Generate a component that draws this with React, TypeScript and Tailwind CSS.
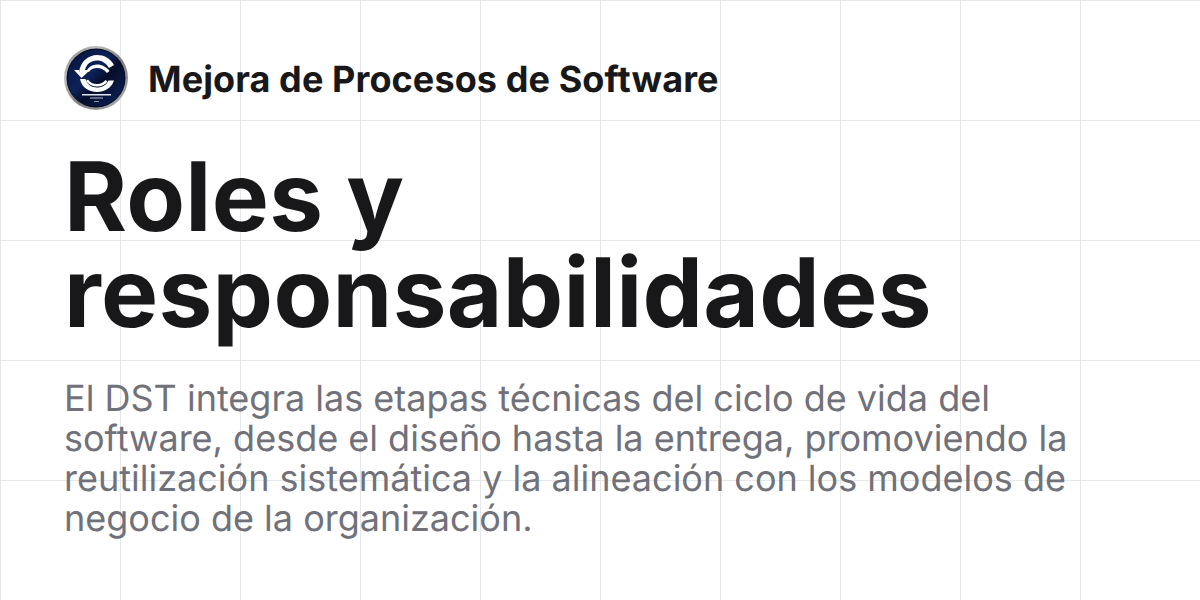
import React from 'react'

const Logo: React.FC = () => (
    <svg width="64" height="64" viewBox="0 0 64 64" className="shrink-0">
        <defs>
            <linearGradient id="ring" x1="0" y1="0" x2="1" y2="1">
                <stop offset="0" stopColor="#6b6b6b" />
                <stop offset="0.25" stopColor="#c0c0c0" />
                <stop offset="0.55" stopColor="#7d7d7d" />
                <stop offset="0.8" stopColor="#9a9a9a" />
                <stop offset="1" stopColor="#cfcfcf" />
            </linearGradient>
            <linearGradient id="face" x1="0" y1="0" x2="1" y2="1">
                <stop offset="0" stopColor="#06123a" />
                <stop offset="0.42" stopColor="#0d2258" />
                <stop offset="0.58" stopColor="#050d2a" />
                <stop offset="1" stopColor="#0e2560" />
            </linearGradient>
        </defs>
        <circle cx="32" cy="32" r="32" fill="url(#ring)" />
        <circle cx="32" cy="32" r="29.5" fill="#050b22" />
        <circle cx="32" cy="32" r="28.5" fill="url(#face)" />
        {/* outer and inner C arcs */}
        <path d="M15 27C16 15 25 9 33 9C40 9 46 12 50 19L45 22C42 17 38 14.500 33 14.500C27 14.500 22.500 18 21 24H26L17.500 32L10 24H15Z" fill="#fff" />
        <path d="M43 27C40 23.500 37 22 33 22C29.500 22 26.500 23.500 25 26L22.500 24.500C25 20.500 28.500 18.500 33 18.500C38 18.500 42.500 21 45.500 25Z" fill="#fff" />
        <path d="M16 33H21.500C23 38.500 27.500 41.500 33 41.500C38 41.500 42.500 39 44.500 34.500H50C47.500 42 40.500 46 33 46C24.500 46 17.500 41 16 33Z" fill="#fff" />
        <path d="M24 33.500C26 36.500 29 38 33 38C36.500 38 39.500 36.500 41.500 34L43.500 35.500C41 39 37.500 40.500 33 40.500C28.500 40.500 24.500 38.500 22 35Z" fill="#fff" />
        <rect x="18" y="48" width="29" height="1.500" fill="#e3e6f0" />
        <rect x="26" y="51.500" width="13" height="1" fill="#b3bbd0" />
        <rect x="30" y="55" width="5" height="1" fill="#8f98b3" />
    </svg>
)

const App: React.FC = () => {
    return (
        <div className="w-[1200px] h-[600px] overflow-hidden bg-white bg-[linear-gradient(to_right,#e5e7eb_1px,transparent_1px),linear-gradient(to_bottom,#e5e7eb_1px,transparent_1px)] bg-[size:120px_120px] font-['Inter',sans-serif] [font-optical-sizing:none] [text-rendering:geometricPrecision] antialiased px-[64px] pt-[46px]">
            <div className="flex items-center gap-[20px]">
                <Logo />
                <span className="pt-[2px] text-[36px] leading-[40px] font-bold tracking-[0.1px] text-[#18181b]">Mejora de Procesos de Software</span>
            </div>
            <h1 className="mt-[39px] text-[96px] leading-[96px] font-bold tracking-[0.3px] text-[#18181b]">Roles y responsabilidades</h1>
            <p className="mt-[37px] text-[36px] leading-[40px] text-[#71717a]">
                El DST integra las etapas técnicas del ciclo de vida del software, desde el diseño hasta la entrega, promoviendo la reutilización sistemática y la alineación con los modelos de negocio de la organización.
            </p>
        </div>
    )
}

export default App
